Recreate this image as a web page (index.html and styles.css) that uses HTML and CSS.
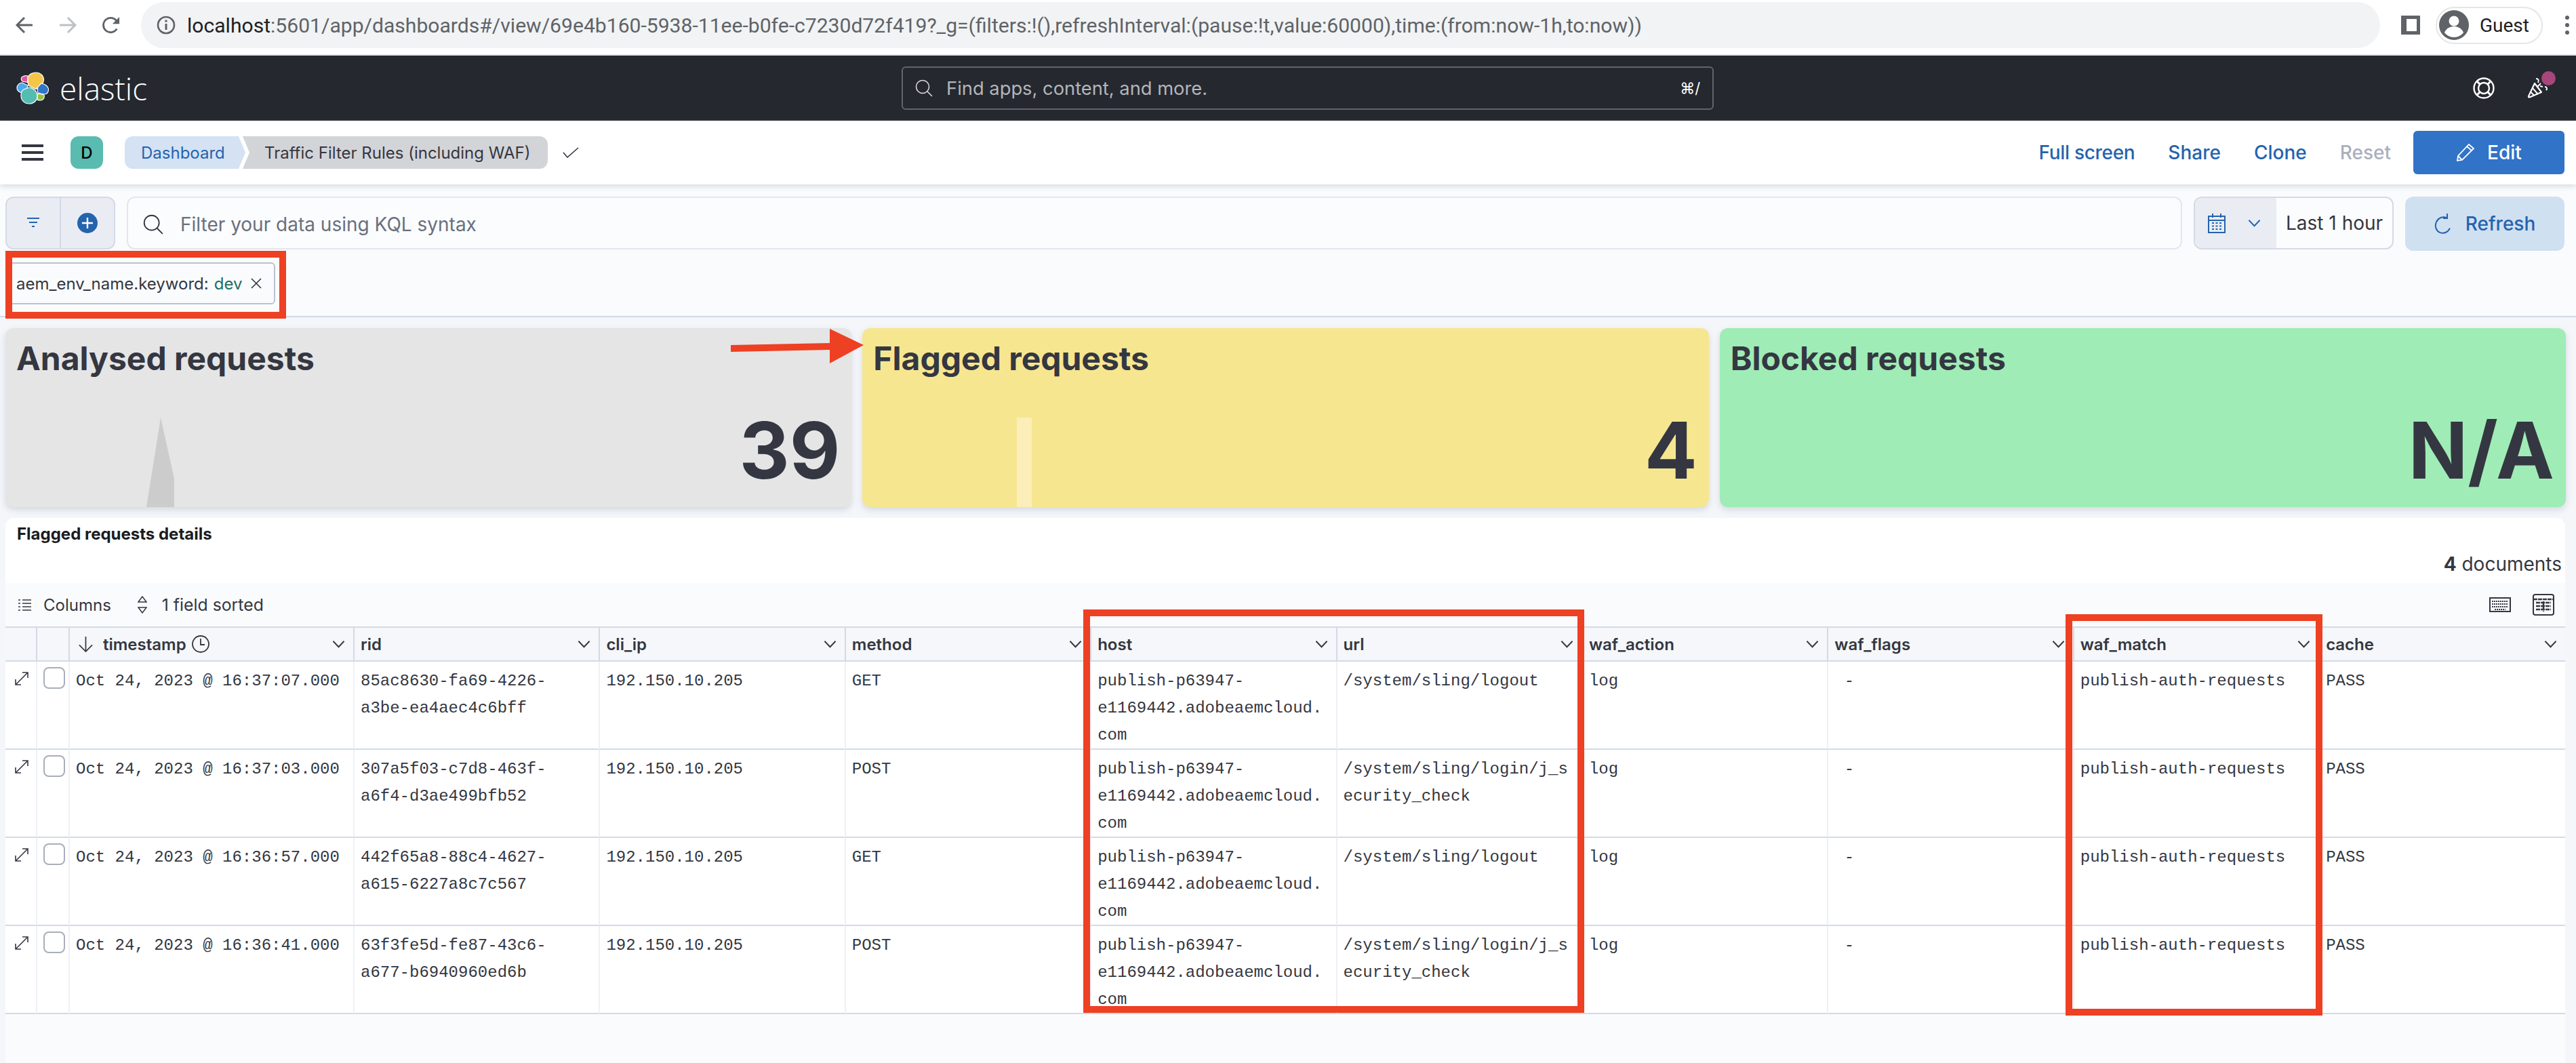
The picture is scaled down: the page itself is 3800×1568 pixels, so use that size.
FILE: index.html
```html
<!DOCTYPE html>
<html lang="en">
<head>
    <meta charset="UTF-8">
    <title>Traffic Filter Rules (including WAF) - Elastic</title>
    <link rel="stylesheet" href="styles.css">
</head>
<body>

<svg class="sprites" width="0" height="0">
    <symbol id="chev" viewBox="0 0 20 12"><path d="M1.5 1.5 10 10.5 18.5 1.5" fill="none" stroke="#343741" stroke-width="2"/></symbol>
    <symbol id="expand" viewBox="0 0 22 22"><path d="M3 19 19 3M12 2h8v8M2 12v8h8" fill="none" stroke="#343741" stroke-width="1.6"/></symbol>
</svg>

<!-- browser chrome -->
<div class="browser-bar">
    <svg class="nav-icon" viewBox="0 0 26 26"><path d="M25 13H3M13 2 2 13l11 11" fill="none" stroke="#5f6368" stroke-width="3"/></svg>
    <svg class="nav-icon" viewBox="0 0 26 26"><path d="M1 13h22M13 2l11 11-11 11" fill="none" stroke="#bdc1c6" stroke-width="3"/></svg>
    <svg class="nav-icon" viewBox="0 0 28 28"><path d="M23 20a11.5 11.5 0 1 1 .5-11" fill="none" stroke="#5f6368" stroke-width="3"/><path d="M27 1v11H16z" fill="#5f6368"/></svg>
    <div class="address">
        <svg class="info-icon" viewBox="0 0 28 28"><circle cx="14" cy="14" r="12" fill="none" stroke="#5f6368" stroke-width="2.6"/><path d="M14 12v9" stroke="#5f6368" stroke-width="3"/><circle cx="14" cy="8" r="1.8" fill="#5f6368"/></svg>
        <span class="url-host">localhost</span><span class="url-rest">:5601/app/dashboards#/view/69e4b160-5938-11ee-b0fe-c7230d72f419?_g=(filters:!(),refreshInterval:(pause:!t,value:60000),time:(from:now-1h,to:now))</span>
    </div>
    <div class="side-icon"></div>
    <div class="guest-chip">
        <svg class="guest-avatar" viewBox="0 0 44 44"><circle cx="22" cy="22" r="22" fill="#5f6368"/><circle cx="22" cy="16" r="7.5" fill="#fff"/><path d="M8 33c3-7 9-9 14-9s11 2 14 9c-3 4-8 7-14 7s-11-3-14-7z" fill="#fff"/></svg>
        <span>Guest</span>
    </div>
    <div class="dots"><i></i><i></i><i></i></div>
</div>

<!-- kibana header -->
<header class="app-nav">
    <div class="logo">
        <svg class="logo-mark" viewBox="0 0 48 48">
            <path d="M17 11C17 5 22 1 29 1s11.500 5 11.500 11c0 3-1.500 5-3.500 7l-8 6.500L18 20c-1-3-1-6-1-9z" fill="#f5c646" stroke="#fff" stroke-width="1.2"/>
            <path d="M8 8c2-2 5-3 9-2l-.5 9.500L9 14c-2-2-2-4-1-6z" fill="#e2569f" stroke="#fff" stroke-width="1.2"/>
            <path d="M1 24c0-5 4-8 8-8l8 4c0 4-4 7-7 11-5 0-9-3-9-7z" fill="#4ea8ee" stroke="#fff" stroke-width="1.2"/>
            <path d="M37 17c6 1 11 5 10.500 10-.5 4-2.500 6-6.500 6l-9-2c-1-3-1-6 0-9z" fill="#2f76c9" stroke="#fff" stroke-width="1.2"/>
            <path d="M32 32l9 2c1 3 0 7-4 8-3 0-5 0-6-1 0-3 0-6 1-9z" fill="#93c43c" stroke="#fff" stroke-width="1.2"/>
            <path d="M7 35c0-5 2-8 4-9l8-3c7 1 12 6 12 13 0 6-5 11-12 11S7 42 7 35z" fill="#55bcb1" stroke="#fff" stroke-width="1.2"/>
        </svg>
        <span class="logo-text">elastic</span>
    </div>
    <div class="global-search">
        <svg class="search-icon" viewBox="0 0 26 26"><circle cx="11" cy="11" r="9.5" fill="none" stroke="#d8d9dc" stroke-width="1.6"/><path d="M18 18l7 7" stroke="#d8d9dc" stroke-width="1.6"/></svg>
        <span class="global-placeholder">Find apps, content, and more.</span>
        <span class="shortcut">⌘/</span>
    </div>
    <div class="nav-right">
        <svg class="help-icon" viewBox="0 0 32 32"><circle cx="16" cy="16" r="14.5" fill="none" stroke="#fff" stroke-width="2.4"/><circle cx="16" cy="16" r="8" fill="none" stroke="#fff" stroke-width="2.4"/><path d="M6 6l5 5M26 6l-5 5M6 26l5-5M26 26l-5-5" stroke="#fff" stroke-width="3"/></svg>
        <div class="news">
            <svg class="news-icon" viewBox="0 0 32 30"><path d="M11 8 2 27c-.3 1 .4 1.600 1.400 1.400L21 21z" fill="none" stroke="#fff" stroke-width="2.200" stroke-linejoin="round"/><path d="M8 15l8 9M5.500 21l5 5M13 1c3 0 5 2 3 6M15 13l5-5M19 12l4 1M26 13c3 0 4 3 2 5" fill="none" stroke="#fff" stroke-width="2"/></svg>
            <span class="news-dot"></span>
        </div>
    </div>
</header>

<div class="crumb-bar">
    <div class="burger"><i></i><i></i><i></i></div>
    <div class="space-avatar">D</div>
    <div class="crumbs">
        <span class="crumb crumb-link">Dashboard</span>
        <span class="crumb crumb-current">Traffic Filter Rules (including WAF)</span>
    </div>
    <svg class="check-icon" viewBox="0 0 24 16"><path d="M1 8l6 7L23 1" fill="none" stroke="#343741" stroke-width="1.600"/></svg>
    <div class="top-links">
        <a class="top-link top-link-wide">Full screen</a>
        <a class="top-link">Share</a>
        <a class="top-link">Clone</a>
        <a class="top-link top-link-off">Reset</a>
        <button class="edit-btn">
            <svg class="pencil-icon" viewBox="0 0 28 28"><path d="M2 26l1-7L19 2l7 6L9 25zM3 19l6 6M16 5l7 6" fill="none" stroke="#fff" stroke-width="1.800"/></svg>
            Edit
        </button>
    </div>
</div>

<div class="query-bar">
    <div class="filter-btns">
        <div class="filter-btn">
            <svg class="filter-icon" viewBox="0 0 20 18"><path d="M1 2h18M4 8h12M8 14h4" stroke="#2563ae" stroke-width="2"/></svg>
        </div>
        <div class="filter-btn">
            <svg class="plus-icon" viewBox="0 0 30 30"><circle cx="15" cy="15" r="15" fill="#2563ae"/><path d="M15 7v16M7 15h16" stroke="#fff" stroke-width="2.400"/></svg>
        </div>
    </div>
    <div class="kql-input">
        <svg class="search-icon" viewBox="0 0 26 26"><circle cx="11" cy="11" r="9.500" fill="none" stroke="#343741" stroke-width="1.600"/><path d="M18 18l7 7" stroke="#343741" stroke-width="1.600"/></svg>
        <span>Filter your data using KQL syntax</span>
    </div>
    <div class="date-picker">
        <div class="date-toggle">
            <svg class="cal-icon" viewBox="0 0 28 30"><path d="M2 5h24v24H2zM2 11h24M8 1v6M20 1v6" fill="none" stroke="#2563ae" stroke-width="2"/><path d="M7 15h3M12.500 15h3M18 15h3M7 19.500h3M12.500 19.500h3M18 19.500h3M7 24h3M12.500 24h3M18 24h3" stroke="#2563ae" stroke-width="2.200"/></svg>
            <svg class="chev chev-blue" viewBox="0 0 20 12"><path d="M1.500 1.500 10 10.500 18.500 1.500" fill="none" stroke="#2563ae" stroke-width="2"/></svg>
        </div>
        <span class="date-label">Last 1 hour</span>
    </div>
    <button class="refresh-btn">
        <svg class="refresh-icon" viewBox="0 0 26 32"><path d="M13 6a11 12 0 1 0 11 12" fill="none" stroke="#2563ae" stroke-width="2" transform="rotate(25 13 18)"/><path d="M19 1v7h-6" fill="none" stroke="#2563ae" stroke-width="2"/></svg>
        Refresh
    </button>
</div>

<div class="filter-row">
    <div class="filter-pill">
        <span>aem_env_name.keyword:</span>
        <span class="pill-value">dev</span>
        <svg class="pill-x" viewBox="0 0 18 18"><path d="M2 2l14 14M16 2 2 16" stroke="#343741" stroke-width="1.600"/></svg>
    </div>
</div>

<section class="metrics">
    <div class="metric metric-grey">
        <h2 class="metric-title">Analysed requests</h2>
        <div class="metric-value">39</div>
        <svg class="spike" viewBox="0 0 41 132"><path d="M0 132 21 0l20 90v42z" fill="#cccccc"/></svg>
    </div>
    <div class="metric metric-yellow">
        <h2 class="metric-title">Flagged requests</h2>
        <div class="metric-value">4</div>
        <div class="bar-mark"></div>
    </div>
    <div class="metric metric-green">
        <h2 class="metric-title">Blocked requests</h2>
        <div class="metric-value">N/A</div>
    </div>
</section>

<section class="panel">
    <h3 class="panel-title">Flagged requests details</h3>
    <div class="doc-count"><b>4</b> documents</div>
    <div class="grid-wrap">
        <div class="grid-toolbar">
            <svg class="tool-icon" viewBox="0 0 20 20"><path d="M1 3h3M7 3h13M1 8h3M7 8h13M1 13h3M7 13h13M1 18h3M7 18h13" stroke="#343741" stroke-width="1.600"/></svg>
            <span class="tool-text tool-columns">Columns</span>
            <svg class="tool-icon sort-icon" viewBox="0 0 14 26"><path d="M7 1 1 9h12zM7 25l-6-8h12z" fill="none" stroke="#343741" stroke-width="1.500"/></svg>
            <span class="tool-text tool-sorted">1 field sorted</span>
            <div class="tool-right">
                <svg class="keyboard-icon" viewBox="0 0 32 22"><rect x="1" y="1" width="30" height="20" fill="none" stroke="#343741" stroke-width="2"/><path d="M4 6h24M4 10h24M4 14h24M8 18h16" stroke="#343741" stroke-width="2" stroke-dasharray="2 1"/></svg>
                <svg class="table-icon" viewBox="0 0 32 32"><rect x="1" y="1" width="30" height="30" rx="3" fill="none" stroke="#343741" stroke-width="2"/><path d="M1 8h30M5 13h22M5 18h22M5 23h22M16 11v15" stroke="#343741" stroke-width="2.500" stroke-dasharray="6 1"/></svg>
            </div>
        </div>

        <div class="grid-row grid-head">
            <div class="head-cell"></div>
            <div class="head-cell"></div>
            <div class="head-cell">
                <svg class="sort-arrow" viewBox="0 0 24 26"><path d="M12 1v23M2 14l10 10 10-10" fill="none" stroke="#343741" stroke-width="1.800"/></svg>
                <span>timestamp</span>
                <svg class="clock-icon" viewBox="0 0 26 26"><circle cx="13" cy="13" r="12" fill="none" stroke="#343741" stroke-width="1.800"/><path d="M13 5v9h6" fill="none" stroke="#343741" stroke-width="1.800"/></svg>
                <svg class="chev"><use href="#chev"/></svg>
            </div>
            <div class="head-cell"><span>rid</span><svg class="chev"><use href="#chev"/></svg></div>
            <div class="head-cell"><span>cli_ip</span><svg class="chev"><use href="#chev"/></svg></div>
            <div class="head-cell"><span>method</span><svg class="chev"><use href="#chev"/></svg></div>
            <div class="head-cell"><span>host</span><svg class="chev"><use href="#chev"/></svg></div>
            <div class="head-cell"><span>url</span><svg class="chev"><use href="#chev"/></svg></div>
            <div class="head-cell"><span>waf_action</span><svg class="chev"><use href="#chev"/></svg></div>
            <div class="head-cell"><span>waf_flags</span><svg class="chev"><use href="#chev"/></svg></div>
            <div class="head-cell"><span>waf_match</span><svg class="chev"><use href="#chev"/></svg></div>
            <div class="head-cell head-last"><span>cache</span><svg class="chev"><use href="#chev"/></svg></div>
        </div>

        <div class="grid-row">
            <div class="cell cell-tool"><svg class="expand-icon"><use href="#expand"/></svg></div>
            <div class="cell cell-tool"><span class="row-check"></span></div>
            <div class="cell">Oct 24, 2023 @ 16:37:07.000</div>
            <div class="cell">85ac8630-fa69-4226-a3be-ea4aec4c6bff</div>
            <div class="cell">192.150.10.205</div>
            <div class="cell">GET</div>
            <div class="cell">publish-p63947-e1169442.adobeaemcloud.com</div>
            <div class="cell">/system/sling/logout</div>
            <div class="cell">log</div>
            <div class="cell">&nbsp;-</div>
            <div class="cell">publish-auth-requests</div>
            <div class="cell">PASS</div>
        </div>
        <div class="grid-row">
            <div class="cell cell-tool"><svg class="expand-icon"><use href="#expand"/></svg></div>
            <div class="cell cell-tool"><span class="row-check"></span></div>
            <div class="cell">Oct 24, 2023 @ 16:37:03.000</div>
            <div class="cell">307a5f03-c7d8-463f-a6f4-d3ae499bfb52</div>
            <div class="cell">192.150.10.205</div>
            <div class="cell">POST</div>
            <div class="cell">publish-p63947-e1169442.adobeaemcloud.com</div>
            <div class="cell">/system/sling/login/j_security_check</div>
            <div class="cell">log</div>
            <div class="cell">&nbsp;-</div>
            <div class="cell">publish-auth-requests</div>
            <div class="cell">PASS</div>
        </div>
        <div class="grid-row">
            <div class="cell cell-tool"><svg class="expand-icon"><use href="#expand"/></svg></div>
            <div class="cell cell-tool"><span class="row-check"></span></div>
            <div class="cell">Oct 24, 2023 @ 16:36:57.000</div>
            <div class="cell">442f65a8-88c4-4627-a615-6227a8c7c567</div>
            <div class="cell">192.150.10.205</div>
            <div class="cell">GET</div>
            <div class="cell">publish-p63947-e1169442.adobeaemcloud.com</div>
            <div class="cell">/system/sling/logout</div>
            <div class="cell">log</div>
            <div class="cell">&nbsp;-</div>
            <div class="cell">publish-auth-requests</div>
            <div class="cell">PASS</div>
        </div>
        <div class="grid-row">
            <div class="cell cell-tool"><svg class="expand-icon"><use href="#expand"/></svg></div>
            <div class="cell cell-tool"><span class="row-check"></span></div>
            <div class="cell">Oct 24, 2023 @ 16:36:41.000</div>
            <div class="cell">63f3fe5d-fe87-43c6-a677-b6940960ed6b</div>
            <div class="cell">192.150.10.205</div>
            <div class="cell">POST</div>
            <div class="cell">publish-p63947-e1169442.adobeaemcloud.com</div>
            <div class="cell">/system/sling/login/j_security_check</div>
            <div class="cell">log</div>
            <div class="cell">&nbsp;-</div>
            <div class="cell">publish-auth-requests</div>
            <div class="cell">PASS</div>
        </div>
    </div>
</section>

<!-- red annotations drawn over the screenshot -->
<div class="mark mark-filter"></div>
<div class="mark mark-host"></div>
<div class="mark mark-waf"></div>
<svg class="mark-arrow" viewBox="0 0 196 52"><path d="M0 24 146 21V0L196 24 146 51V31L0 34z" fill="#ee4023"/></svg>

</body>
</html>
```

FILE: styles.css
```css
* {
    box-sizing: border-box;
}
html, body {
    margin: 0;
    padding: 0;
}
body {
    position: relative;
    width: 3800px;
    height: 1568px;
    overflow: hidden;
    font-family: Inter, "Liberation Sans", sans-serif;
    color: #343741;
    background-color: #f4f6fa;
}
svg {
    display: block;
    flex: none;
}
.sprites {
    position: absolute;
}

/* browser chrome */
.browser-bar {
    display: flex;
    align-items: center;
    height: 82px;
    padding: 0 0 6px 23px;
    background: #fff;
    border-bottom: 2px solid #dee1e6;
}
.nav-icon {
    width: 26px;
    height: 26px;
    margin-right: 38px;
}
.address {
    display: flex;
    align-items: center;
    width: 3303px;
    height: 68px;
    margin-left: -7px;
    padding-left: 23px;
    border-radius: 34px;
    background: #f1f3f4;
    font-family: Roboto, sans-serif;
    font-size: 30.1px;
    white-space: nowrap;
}
.info-icon {
    width: 28px;
    height: 28px;
    margin-right: 17px;
}
.url-host {
    color: #202124;
}
.url-rest {
    color: #5f6368;
}
.side-icon {
    width: 28px;
    height: 28px;
    margin-left: 31px;
    border: 5px solid #5f6368;
    border-right-width: 5px;
    border-left-width: 8px;
}
.guest-chip {
    display: flex;
    align-items: center;
    gap: 16px;
    width: 158px;
    height: 55px;
    margin-left: 23px;
    padding-left: 3px;
    border: 2px solid #e4e6e8;
    border-radius: 28px;
    font-family: Roboto, sans-serif;
    font-size: 28px;
    color: #202124;
}
.guest-avatar {
    width: 44px;
    height: 44px;
}
.dots {
    display: flex;
    flex-direction: column;
    gap: 5px;
    margin-left: 33px;
}
.dots i {
    width: 6px;
    height: 6px;
    border-radius: 50%;
    background: #5f6368;
}

/* kibana dark header */
.app-nav {
    position: relative;
    display: flex;
    align-items: center;
    height: 96px;
    padding: 0 40px 0 24px;
    background: #25282f;
}
.logo {
    display: flex;
    align-items: center;
    gap: 16px;
}
.logo-mark {
    width: 48px;
    height: 48px;
}
.logo-text {
    font-family: "Open Sans", sans-serif;
    font-weight: 300;
    font-size: 46px;
    line-height: 1;
    color: #fff;
}
.global-search {
    display: flex;
    align-items: center;
    gap: 20px;
    width: 1198px;
    height: 64px;
    margin-left: 1113px;
    padding: 0 18px;
    border: 2px solid #62646b;
    border-radius: 6px;
}
.search-icon {
    width: 26px;
    height: 26px;
}
.global-placeholder {
    font-size: 27.3px;
    color: #b4b5b9;
}
.shortcut {
    margin-left: auto;
    font-size: 22px;
    color: #fff;
}
.nav-right {
    display: flex;
    align-items: center;
    gap: 48px;
    margin-left: auto;
}
.help-icon {
    width: 32px;
    height: 32px;
}
.news {
    position: relative;
    width: 32px;
    height: 30px;
}
.news-icon {
    width: 32px;
    height: 30px;
}
.news-dot {
    position: absolute;
    top: -10px;
    right: -10px;
    width: 21px;
    height: 21px;
    border-radius: 50%;
    background: #a8457b;
}

/* breadcrumb row */
.crumb-bar {
    position: relative;
    z-index: 2;
    display: flex;
    align-items: center;
    height: 94px;
    padding: 0 17px 0 32px;
    background: #fff;
    box-shadow: 0 3px 8px rgba(152, 162, 179, 0.35);
}
.burger {
    display: flex;
    flex-direction: column;
    gap: 6px;
    width: 32px;
}
.burger i {
    height: 4px;
    background: #343741;
}
.space-avatar {
    display: flex;
    align-items: center;
    justify-content: center;
    width: 48px;
    height: 48px;
    margin-left: 40px;
    border-radius: 12px;
    background: #5abcb0;
    color: #000;
    font-size: 24px;
    font-weight: 500;
}
.crumbs {
    display: flex;
    margin-left: 32px;
}
.crumb {
    display: flex;
    align-items: center;
    height: 48px;
    font-size: 24px;
    white-space: nowrap;
}
.crumb-link {
    width: 178px;
    padding-left: 24px;
    border-radius: 12px 0 0 12px;
    background: #d4e2f4;
    color: #2563ae;
    clip-path: polygon(0 0, 168px 0, 178px 50%, 168px 100%, 0 100%);
}
.crumb-current {
    width: 450px;
    margin-left: -4px;
    padding-left: 32px;
    border-radius: 0 12px 12px 0;
    background: #d3d4d8;
    clip-path: polygon(0 0, 100% 0, 100% 100%, 0 100%, 10px 50%);
}
.check-icon {
    width: 24px;
    height: 16px;
    margin-left: 22px;
}
.top-links {
    display: flex;
    align-items: center;
    gap: 49px;
    margin-left: auto;
}
.top-link {
    font-size: 28px;
    font-weight: 500;
    color: #2563ae;
}
.top-link-wide {
    letter-spacing: -0.3px;
}
.top-link-off {
    color: #a9b0bd;
}
.edit-btn {
    display: flex;
    align-items: center;
    justify-content: center;
    gap: 18px;
    width: 223px;
    height: 64px;
    margin-left: -16px;
    border: 0;
    border-radius: 6px;
    background: #3173c7;
    color: #fff;
    font-family: inherit;
    font-size: 28px;
    font-weight: 500;
}
.pencil-icon {
    width: 28px;
    height: 28px;
}

/* query bar */
.query-bar {
    display: flex;
    gap: 17px;
    height: 96px;
    padding: 18px 17px 0 8px;
    background: #fafbfd;
}
.filter-btns {
    display: flex;
    width: 162px;
    height: 78px;
    border: 2px solid #d3dae6;
    border-radius: 12px;
    background: #e9edf3;
}
.filter-btn {
    display: flex;
    flex: 1;
    align-items: center;
    justify-content: center;
}
.filter-btn + .filter-btn {
    border-left: 2px solid #d3dae6;
}
.filter-icon {
    width: 20px;
    height: 18px;
}
.plus-icon {
    width: 30px;
    height: 30px;
}
.kql-input {
    display: flex;
    flex: 1;
    align-items: center;
    gap: 30px;
    height: 78px;
    padding: 3px 0 0 22px;
    border: 2px solid #e3e6ef;
    border-radius: 12px;
    background: #fbfcfd;
    font-size: 28px;
    color: #69707d;
}
.kql-input .search-icon {
    width: 30px;
    height: 30px;
    margin-right: -5px;
}
.date-picker {
    display: flex;
    align-items: center;
    width: 295px;
    height: 78px;
    border: 2px solid #d3dae6;
    border-radius: 12px;
    background: #fbfcfd;
    overflow: hidden;
}
.date-toggle {
    display: flex;
    align-items: center;
    gap: 32px;
    width: 120px;
    height: 100%;
    padding-left: 18px;
    background: #e9edf3;
}
.cal-icon {
    width: 28px;
    height: 30px;
}
.date-label {
    margin-left: 14px;
    font-size: 28px;
    white-space: nowrap;
}
.refresh-btn {
    display: flex;
    align-items: center;
    justify-content: center;
    gap: 20px;
    width: 235px;
    height: 80px;
    border: 0;
    border-radius: 12px;
    background: #cfe0f1;
    color: #2563ae;
    font-family: inherit;
    font-size: 28px;
    font-weight: 500;
}
.refresh-icon {
    width: 26px;
    height: 32px;
}

/* filter pills */
.filter-row {
    height: 100px;
    padding: 19px 0 0 8px;
    background: #fafbfd;
    border-bottom: 2px solid #d3dae6;
}
.filter-pill {
    display: inline-flex;
    align-items: center;
    gap: 8px;
    width: 398px;
    height: 62px;
    padding-left: 14px;
    border: 2px solid #bcc1cc;
    border-radius: 6px;
    font-size: 24px;
    white-space: nowrap;
}
.pill-value {
    color: #1e6f62;
}
.pill-x {
    width: 18px;
    height: 18px;
    margin-left: 4px;
}

/* metric cards */
.metrics {
    display: flex;
    gap: 16px;
    height: 296px;
    padding: 16px 15px 16px 8px;
}
.metric {
    position: relative;
    display: flex;
    flex: 1;
    flex-direction: column;
    padding: 16px 17px 26px 16px;
    border-radius: 12px;
    overflow: hidden;
    box-shadow: 0 4px 10px rgba(152, 162, 179, 0.35);
}
.metric-grey {
    background: #e5e5e5;
}
.metric-yellow {
    background: #f7e690;
}
.metric-green {
    background: #a0ecb6;
}
.metric-title {
    position: relative;
    margin: 0;
    font-size: 48px;
    font-weight: 700;
    line-height: 58px;
}
.metric-value {
    position: relative;
    z-index: 1;
    margin-top: auto;
    text-align: right;
    font-size: 115px;
    font-weight: 700;
    line-height: 114px;
}
.spike {
    position: absolute;
    left: 208px;
    bottom: 0;
    width: 41px;
    height: 132px;
}
.bar-mark {
    position: absolute;
    left: 228px;
    bottom: 0;
    width: 22px;
    height: 132px;
    background: #fbeeb8;
}

/* saved search panel */
.panel {
    position: relative;
    height: 804px;
    margin: 0 16px 0 8px;
    border-radius: 12px 12px 0 0;
    background: #fff;
}
.panel-title {
    margin: 0;
    padding: 10px 0 0 17px;
    font-size: 24px;
    font-weight: 700;
    line-height: 28px;
    color: #1a1c21;
}
.doc-count {
    margin-top: 13px;
    padding-right: 5px;
    text-align: right;
    font-size: 28px;
    line-height: 34px;
}
.grid-wrap {
    height: 708px;
    margin-top: 11px;
    background: #fafbfd;
}
.grid-toolbar {
    display: flex;
    align-items: center;
    height: 64px;
    padding: 0 16px 0 18px;
}
.tool-icon {
    width: 20px;
    height: 20px;
}
.tool-text {
    margin-left: 18px;
    font-size: 24px;
}
.tool-columns {
    margin-right: 39px;
}
.tool-sorted {
    margin-left: 22px;
    font-size: 24.8px;
}
.sort-icon {
    width: 14px;
    height: 26px;
}
.tool-right {
    display: flex;
    align-items: center;
    gap: 32px;
    margin-left: auto;
}
.keyboard-icon {
    width: 32px;
    height: 22px;
}
.table-icon {
    width: 32px;
    height: 32px;
}
.grid-row {
    display: grid;
    grid-template-columns: 47px 48px 420px repeat(8, 362.4px) 1fr;
    height: 130px;
    background: #fff;
    border-bottom: 2px solid #d3dae6;
}
.grid-head {
    height: 52px;
    border-top: 2px solid #d3dae6;
    background: #f5f7fa;
}
.head-cell {
    display: flex;
    align-items: center;
    padding: 0 12px 0 9px;
    border-right: 2px solid #d3dae6;
    font-size: 24px;
    font-weight: 600;
}
.head-last {
    border-right: 0;
}
.chev {
    width: 19px;
    height: 12px;
    margin-left: auto;
}
.chev-blue {
    margin-left: 0;
}
.sort-arrow {
    width: 23px;
    height: 25px;
    margin: 0 14px 0 3px;
}
.clock-icon {
    width: 26px;
    height: 26px;
    margin-left: 8px;
}
.cell {
    padding: 9px 9px 0;
    border-right: 2px solid #eef0f6;
    font-family: "Liberation Mono", monospace;
    font-size: 24px;
    line-height: 40px;
    overflow-wrap: anywhere;
}
.cell:last-child {
    border-right: 0;
}
.cell-tool {
    padding: 8px 0 0;
}
.expand-icon {
    width: 22px;
    height: 22px;
    margin: 6px 0 0 13px;
}
.row-check {
    display: block;
    width: 32px;
    height: 32px;
    margin-left: 9px;
    border: 2px solid #a9aeb8;
    border-radius: 8px;
}

/* annotations */
.mark {
    position: absolute;
    border: 10px solid #ee4023;
}
.mark-filter {
    left: 8px;
    top: 370px;
    width: 414px;
    height: 100px;
}
.mark-host {
    left: 1598px;
    top: 899px;
    width: 739px;
    height: 595px;
}
.mark-waf {
    left: 3047px;
    top: 906px;
    width: 379px;
    height: 592px;
}
.mark-arrow {
    position: absolute;
    left: 1078px;
    top: 485px;
    width: 196px;
    height: 52px;
}
```
